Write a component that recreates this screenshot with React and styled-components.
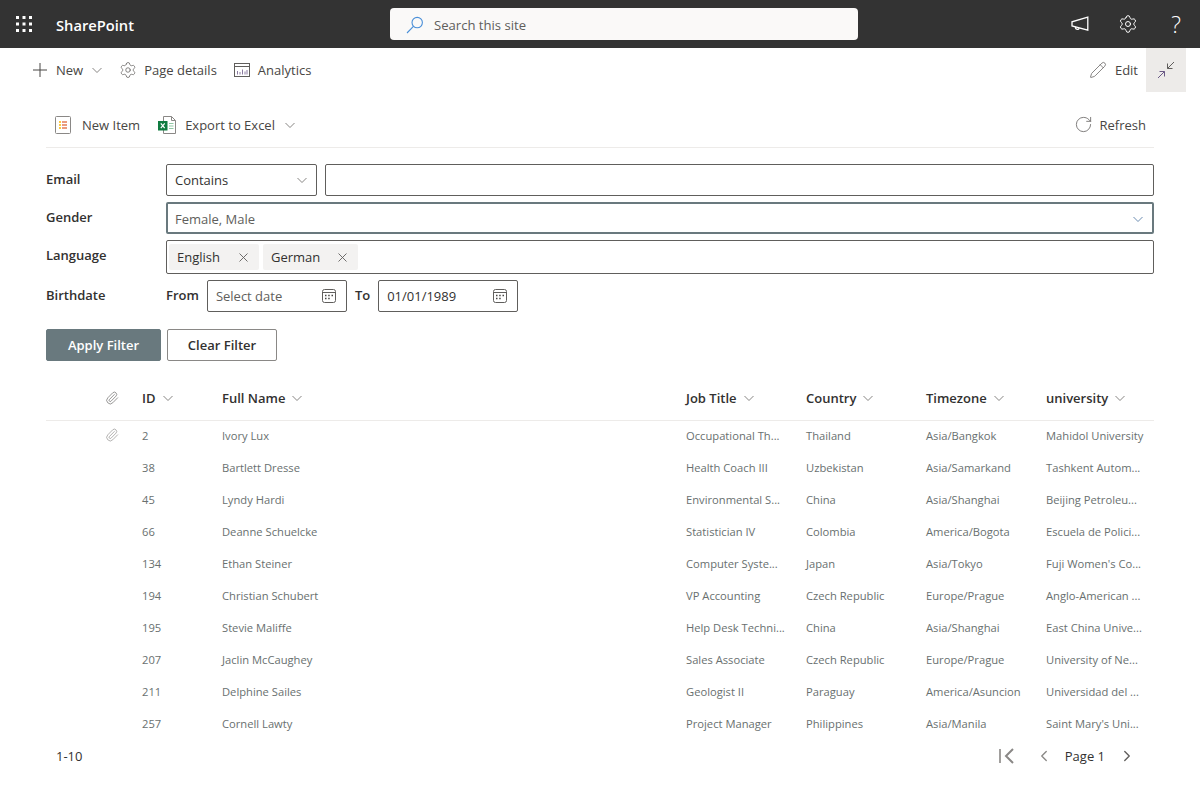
import React from "react";
import styled, { createGlobalStyle } from "styled-components";
import { Settings, ChevronLeft, ChevronRight, Paperclip, Pencil, RotateCw } from "lucide-react";

const Global = createGlobalStyle`
  html, body { margin: 0; padding: 0; background: #fff; }
  body { font-family: "Open Sans", "Noto Sans", "Liberation Sans", sans-serif; font-size: 13px; color: #323130; }
  * { box-sizing: border-box; }
`;

const Page = styled.div`width: 1200px; height: 800px; overflow: hidden; display: flex; flex-direction: column;`;

const SuiteBar = styled.header`
  height: 48px; background: #333; color: #fff; display: flex; align-items: center; flex: none;
`;
const Waffle = styled.div`
  width: 48px; height: 48px; display: flex; align-items: center; justify-content: center;
`;
const Brand = styled.div`
  width: 342px; padding: 1px 0 0 8px; font-size: 14.7px; font-weight: 600; color: #fff;
`;
const SearchBox = styled.div`
  width: 468px; height: 32px; background: #faf9f8; border-radius: 4px; display: flex; align-items: center;
  padding: 1px 0 0 16px; gap: 10px; color: #605e5c; font-size: 13.1px;
`;
const SuiteIcons = styled.div`
  margin-left: auto; display: flex; align-items: center;
`;
const SuiteIcon = styled.div`
  width: 48px; height: 48px; display: flex; align-items: center; justify-content: center; color: #fff;
  font-size: 23px; font-weight: 300;
`;

const CommandBar = styled.div`
  height: 44px; flex: none; display: flex; align-items: center; padding-left: 32px;
`;
const Cmd = styled.div`
  display: flex; align-items: center; color: #484644; font-size: 13px; white-space: nowrap;
  gap: ${(p) => p.$gap ?? 8}px; margin-right: ${(p) => p.$mr ?? 0}px; margin-left: ${(p) => (p.$auto ? "auto" : "0")};
`;
const CollapseBtn = styled.div`
  width: 40px; height: 44px; background: #edebe9; margin-left: 8px; margin-right: 14px;
  display: flex; align-items: center; justify-content: center;
`;

const Main = styled.main`
  flex: 1; padding: 0 46px; display: flex; flex-direction: column;
`;
const ListBar = styled.div`
  height: 56px; flex: none; border-bottom: 1px solid #edebe9; display: flex; align-items: center;
  padding: 10px 8px 0 9px;
`;
const FilterRow = styled.div`
  display: flex; align-items: flex-start; margin-top: ${(p) => p.$mt}px;
`;
const Label = styled.div`
  width: 120px; flex: none; font-weight: 600; font-size: 13px; color: #323130; line-height: 30px;
`;
const InlineLabel = styled.div`
  font-weight: 600; font-size: 13px; line-height: 30px; margin-right: ${(p) => p.$mr}px;
`;
const Field = styled.div`
  height: ${(p) => p.$h ?? 32}px; border: ${(p) => (p.$focus ? "2px solid #69797e" : "1px solid #605e5c")};
  border-radius: 2px; display: flex; align-items: center; flex: ${(p) => (p.$w ? "none" : "1")};
  width: ${(p) => (p.$w ? `${p.$w}px` : "auto")}; margin-right: ${(p) => p.$mr ?? 0}px;
  padding: ${(p) => p.$pad ?? "0 8px"};
  color: ${(p) => p.$color ?? "#323130"}; font-size: 13px; justify-content: ${(p) => (p.$chips ? "flex-start" : "space-between")};
  gap: ${(p) => (p.$chips ? "4px" : "0")};
`;
const Chip = styled.div`
  height: 26px; background: #f3f2f1; border-radius: 2px; display: flex; align-items: center;
  width: ${(p) => p.$w}px; padding-left: 8px; justify-content: space-between; padding-right: 11px; color: #323130;
`;
const Buttons = styled.div`
  display: flex; gap: 6px; margin-top: 17px;
`;
const Button = styled.div`
  height: 32px; width: ${(p) => p.$w}px; border-radius: 2px; font-weight: 600; font-size: 13px;
  display: flex; align-items: center; justify-content: center;
  background: ${(p) => (p.$primary ? "#69797e" : "#fff")}; color: ${(p) => (p.$primary ? "#fff" : "#323130")};
  border: 1px solid ${(p) => (p.$primary ? "#69797e" : "#8a8886")};
`;

const cols = "86px 80px 464px 120px 120px 120px 118px";
const HeadRow = styled.div`
  display: grid; grid-template-columns: ${cols}; height: 45px; margin-top: 15px; align-items: center;
  border-bottom: 1px solid #edebe9; flex: none;
`;
const HeadCell = styled.div`
  padding-left: 10px; font-weight: 600; font-size: 13px; color: #323130; display: flex; align-items: center; gap: 6px;
  white-space: nowrap;
`;
const IconCell = styled.div`
  display: flex; justify-content: flex-end; padding-right: 13px; align-items: center;
  padding-bottom: ${(p) => p.$pb ?? 0}px;
`;
const Row = styled.div`
  display: grid; grid-template-columns: ${cols}; height: 32px; align-items: center; flex: none;
`;
const Cell = styled.div`
  padding: 0 0 4px 10px; font-size: 11.2px; color: #69706f; white-space: nowrap; overflow: hidden;
`;
const Pager = styled.div`
  display: flex; align-items: center; height: 30px; flex: none; padding-left: 10px; color: #323130; font-size: 13px;
`;
const PagerRight = styled.div`
  margin-left: auto; display: flex; align-items: center; margin-right: 18px;
`;
const PageLabel = styled.span`margin: 0 13px 0 12px;`;
const PrevWrap = styled.span`display: flex; margin-left: 19px;`;

const rows = [
  ["2", "Ivory Lux", "Occupational Th...", "Thailand", "Asia/Bangkok", "Mahidol University"],
  ["38", "Bartlett Dresse", "Health Coach III", "Uzbekistan", "Asia/Samarkand", "Tashkent Autom..."],
  ["45", "Lyndy Hardi", "Environmental S...", "China", "Asia/Shanghai", "Beijing Petroleu..."],
  ["66", "Deanne Schuelcke", "Statistician IV", "Colombia", "America/Bogota", "Escuela de Polici..."],
  ["134", "Ethan Steiner", "Computer Syste...", "Japan", "Asia/Tokyo", "Fuji Women's Co..."],
  ["194", "Christian Schubert", "VP Accounting", "Czech Republic", "Europe/Prague", "Anglo-American ..."],
  ["195", "Stevie Maliffe", "Help Desk Techni...", "China", "Asia/Shanghai", "East China Unive..."],
  ["207", "Jaclin McCaughey", "Sales Associate", "Czech Republic", "Europe/Prague", "University of Ne..."],
  ["211", "Delphine Sailes", "Geologist II", "Paraguay", "America/Asuncion", "Universidad del ..."],
  ["257", "Cornell Lawty", "Project Manager", "Philippines", "Asia/Manila", "Saint Mary's Uni..."],
];
const heads = ["ID", "Full Name", "Job Title", "Country", "Timezone", "university"];

const WaffleIcon = () => (
  <svg width="16" height="16" viewBox="0 0 16 16" fill="#fff">
    {[0, 6.5, 13].flatMap((y) => [0, 6.5, 13].map((x) => <rect key={`${x}-${y}`} x={x} y={y} width="3" height="3" />))}
  </svg>
);
const SearchIcon = () => (
  <svg width="18" height="18" viewBox="0 0 18 18" fill="none" stroke="#4a8fd8" strokeWidth="1.1">
    <circle cx="11.2" cy="6.6" r="5.2" />
    <path d="M7.4 10.4 1 17" />
  </svg>
);
const Megaphone = () => (
  <svg width="18" height="16" viewBox="0 0 18 16" fill="none" stroke="#fff" strokeWidth="1.3">
    <path d="M16.800 1.200v13L1 10V5.800z" />
    <path d="M4.600 11c-.8 2.200 2.800 3.400 3.600 1.200" />
  </svg>
);
const Collapse = () => (
  <svg width="18" height="18" viewBox="0 0 18 18" fill="none" stroke="#605e5c" strokeWidth="1">
    <path d="M17 1 10.500 7.500M10.500 2.500v5h5" />
    <path d="M1 17l6.500-6.500M2.500 10.500h5v5" stroke="#6b5a86" />
  </svg>
);
const Analytics = () => (
  <svg width="16" height="14" viewBox="0 0 16 14" fill="none" stroke="#605e5c">
    <rect x=".5" y=".5" width="15" height="13" />
    <path d="M.5 3.500h15" />
    <path d="M3.500 11.500V8M6 11.500V9M8.500 11.500V6.500M11 11.500V8.500M13 11.500V7" stroke="#8a7aa0" />
  </svg>
);
const NewItemIcon = () => (
  <svg width="16" height="18" viewBox="0 0 16 18" fill="none">
    <rect x=".5" y=".5" width="15" height="17" rx="1" stroke="#8a8886" fill="#fff" />
    <path d="M4 6h2M4 9h2M4 12h2" stroke="#ffb900" strokeWidth="1.5" />
    <path d="M7 6h5M7 9h5M7 12h5" stroke="#d83b01" strokeWidth="1.2" />
  </svg>
);
const ExcelIcon = () => (
  <svg width="18" height="18" viewBox="0 0 18 18" fill="none">
    <path d="M5.500.5h8l4 4v13h-12z" fill="#fff" stroke="#8a8886" />
    <path d="M13.500.5v4h4" stroke="#8a8886" />
    <path d="M11 7.500h4.500M11 10h4.500M11 12.500h4.500" stroke="#8fc7a3" strokeWidth="1" />
    <rect y="5" width="9.500" height="9.500" fill="#107c41" />
    <path d="M2.800 7.300 6.700 12.200M6.700 7.300 2.800 12.200" stroke="#fff" strokeWidth="1.200" />
  </svg>
);
const FirstPage = () => (
  <svg width="18" height="16" viewBox="0 0 18 16" fill="none">
    <path d="M2 1v14" stroke="#a19f9d" strokeWidth="2" />
    <path d="M15 1 8 8l7 7" stroke="#8a8886" strokeWidth="2" />
  </svg>
);
const PlusIcon = () => (
  <svg width="16" height="16" viewBox="0 0 16 16" fill="none" stroke="#484644" strokeWidth="1">
    <path d="M8 1v14M1 8h14" />
  </svg>
);
const Chev = ({ c = "#797775" }) => (
  <svg width="12" height="12" viewBox="0 0 12 12" fill="none" stroke={c} strokeWidth="0.9">
    <path d="M1.500 4 6 8.500 10.500 4" />
  </svg>
);
const CloseIcon = () => (
  <svg width="9" height="9" viewBox="0 0 9 9" fill="none" stroke="#605e5c" strokeWidth="0.9">
    <path d="M.5.5l8 8M8.500.5l-8 8" />
  </svg>
);
const Cal = () => (
  <svg width="16" height="16" viewBox="0 0 16 16" fill="none" stroke="#605e5c" strokeWidth="1">
    <rect x="1.500" y="1.500" width="13" height="13" rx="2" />
    <path d="M1.500 4.500h13" />
    <path d="M4 7.500h1.500M7.200 7.500h1.500M10.500 7.500h1.500M4 10.500h1.500M7.200 10.500h1.500" strokeWidth="1.400" stroke="#484644" />
  </svg>
);
const Clip = ({ c }) => <Paperclip size={14} color={c} strokeWidth={1.1} />;

export default function App() {
  return (
    <Page>
      <Global />
      <SuiteBar>
        <Waffle><WaffleIcon /></Waffle>
        <Brand>SharePoint</Brand>
        <SearchBox><SearchIcon />Search this site</SearchBox>
        <SuiteIcons>
          <SuiteIcon><Megaphone /></SuiteIcon>
          <SuiteIcon><Settings size={20} strokeWidth={1.2} /></SuiteIcon>
          <SuiteIcon>?</SuiteIcon>
        </SuiteIcons>
      </SuiteBar>

      <CommandBar>
        <Cmd $mr={16}><PlusIcon />New<Chev /></Cmd>
        <Cmd $mr={17} $gap={7}><Settings size={18} color="#605e5c" strokeWidth={1} />Page details</Cmd>
        <Cmd><Analytics />Analytics</Cmd>
        <Cmd $auto><Pencil size={18} color="#605e5c" strokeWidth={1} />Edit</Cmd>
        <CollapseBtn><Collapse /></CollapseBtn>
      </CommandBar>

      <Main>
        <ListBar>
          <Cmd $mr={18} $gap={11}><NewItemIcon />New Item</Cmd>
          <Cmd $gap={9}><ExcelIcon />Export to Excel<Chev /></Cmd>
          <Cmd $auto $gap={7}><RotateCw size={19} color="#605e5c" strokeWidth={1} />Refresh</Cmd>
        </ListBar>

        <FilterRow $mt={16}>
          <Label>Email</Label>
          <Field $w={151} $mr={8}>Contains<Chev /></Field>
          <Field />
        </FilterRow>
        <FilterRow $mt={6}>
          <Label>Gender</Label>
          <Field $focus $color="#605e5c" $pad="1px 8px 0 7px">Female, Male<Chev c="#5a7fa8" /></Field>
        </FilterRow>
        <FilterRow $mt={6}>
          <Label>Language</Label>
          <Field $h={34} $chips $pad="0 2px">
            <Chip $w={90}>English<CloseIcon /></Chip>
            <Chip $w={95}>German<CloseIcon /></Chip>
          </Field>
        </FilterRow>
        <FilterRow $mt={6}>
          <Label>Birthdate</Label>
          <InlineLabel $mr={8}>From</InlineLabel>
          <Field $w={140} $mr={8} $color="#605e5c" $pad="0 9px 0 8px">Select date<Cal /></Field>
          <InlineLabel $mr={8}>To</InlineLabel>
          <Field $w={140} $pad="0 9px 0 8px">01/01/1989<Cal /></Field>
        </FilterRow>

        <Buttons>
          <Button $primary $w={115}>Apply Filter</Button>
          <Button $w={110}>Clear Filter</Button>
        </Buttons>

        <HeadRow>
          <IconCell><Clip c="#605e5c" /></IconCell>
          {heads.map((h) => <HeadCell key={h}>{h}<Chev /></HeadCell>)}
        </HeadRow>
        {rows.map((r, i) => (
          <Row key={r[0]}>
            <IconCell $pb={4}>{i === 0 && <Clip c="#8a8886" />}</IconCell>
            <Cell>{r[0]}</Cell>
            <Cell>{r[1]}</Cell>
            <Cell>{r[2]}</Cell>
            <Cell>{r[3]}</Cell>
            <Cell>{r[4]}</Cell>
            <Cell>{r[5]}</Cell>
          </Row>
        ))}
        <Pager>
          1-10
          <PagerRight>
            <FirstPage />
            <PrevWrap><ChevronLeft size={18} color="#8a8886" strokeWidth={1.8} /></PrevWrap>
            <PageLabel>Page 1</PageLabel>
            <ChevronRight size={18} color="#605e5c" strokeWidth={1.8} />
          </PagerRight>
        </Pager>
      </Main>
    </Page>
  );
}
